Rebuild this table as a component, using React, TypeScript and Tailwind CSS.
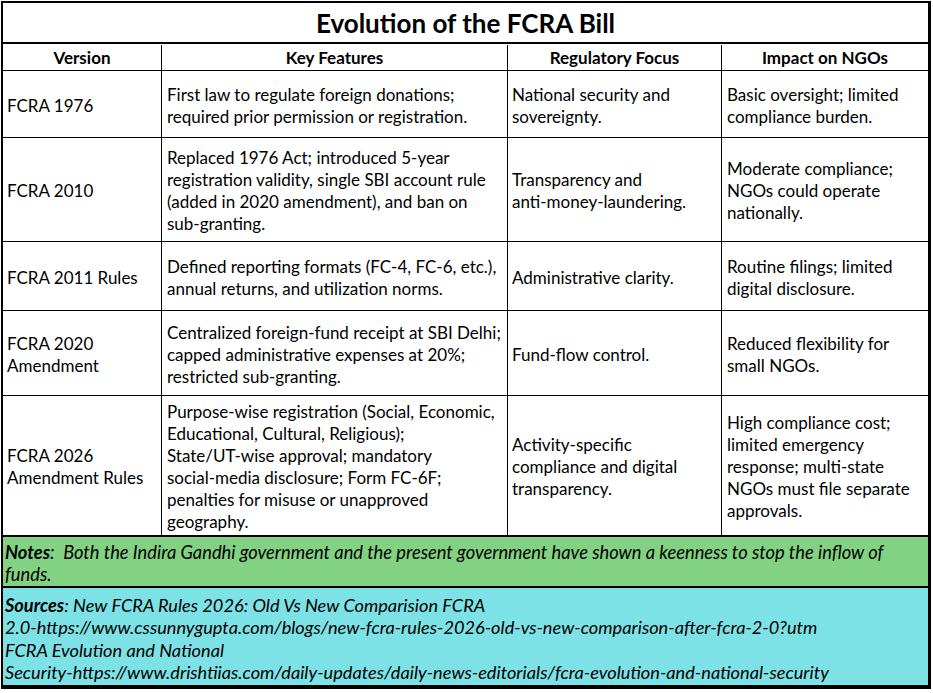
const rows = [
  {
    h: "h-[67px]",
    last: false,
    version: ["FCRA 1976"],
    features: [
      "First law to regulate foreign donations;",
      "required prior permission or registration.",
    ],
    focus: ["National security and", "sovereignty."],
    impact: ["Basic oversight; limited", "compliance burden."],
  },
  {
    h: "h-[104px]",
    last: false,
    version: ["FCRA 2010"],
    features: [
      "Replaced 1976 Act; introduced 5-year",
      "registration validity, single SBI account rule",
      "(added in 2020 amendment), and ban on",
      "sub-granting.",
    ],
    focus: ["Transparency and", "anti-money-laundering."],
    impact: ["Moderate compliance;", "NGOs could operate", "nationally."],
  },
  {
    h: "h-[69px]",
    last: false,
    version: ["FCRA 2011 Rules"],
    features: [
      "Defined reporting formats (FC-4, FC-6, etc.),",
      "annual returns, and utilization norms.",
    ],
    focus: ["Administrative clarity."],
    impact: ["Routine filings; limited", "digital disclosure."],
  },
  {
    h: "h-[85px]",
    last: false,
    version: ["FCRA 2020", "Amendment"],
    features: [
      "Centralized foreign-fund receipt at SBI Delhi;",
      "capped administrative expenses at 20%;",
      "restricted sub-granting.",
    ],
    focus: ["Fund-flow control."],
    impact: ["Reduced flexibility for", "small NGOs."],
  },
  {
    h: "h-[141px]",
    last: true,
    version: ["FCRA 2026", "Amendment Rules"],
    features: [
      "Purpose-wise registration (Social, Economic,",
      "Educational, Cultural, Religious);",
      "State/UT-wise approval; mandatory",
      "social-media disclosure; Form FC-6F;",
      "penalties for misuse or unapproved",
      "geography.",
    ],
    focus: ["Activity-specific", "compliance and digital", "transparency."],
    impact: [
      "High compliance cost;",
      "limited emergency",
      "response; multi-state",
      "NGOs must file separate",
      "approvals.",
    ],
  },
];

function Lines({ lines }: { lines: string[] }) {
  return (
    <div>
      {lines.map((line) => (
        <div key={line} className="whitespace-nowrap">
          {line}
        </div>
      ))}
    </div>
  );
}

export default function App() {
  return (
    <div className="min-h-screen bg-white pl-[1px] pt-[1px] font-['Lato',sans-serif] text-black">
      <div className="w-[930px] border-t-2 border-b-[4px] border-l-2 border-r-[3px] border-black">
        <div className="flex h-[41px] items-center justify-center border-b-2 border-black pt-[1px] text-[26px] font-bold">
          Evolution of the FCRA Bill
        </div>

        <div className="flex h-[27px] border-b border-black pt-[1px] text-[17px] font-bold">
          <div className="flex w-[159px] items-center justify-center border-r border-black">
            Version
          </div>
          <div className="flex w-[346px] items-center justify-center border-r border-black">
            Key Features
          </div>
          <div className="flex w-[214px] items-center justify-center border-r border-black">
            Regulatory Focus
          </div>
          <div className="flex flex-1 items-center justify-center">
            Impact on NGOs
          </div>
        </div>

        {rows.map((row) => (
          <div
            key={row.version.join(" ")}
            className={`flex ${row.h} border-black text-[17px] leading-[22px] ${
              row.last ? "border-b-2" : "border-b"
            }`}
          >
            <div className="flex w-[159px] items-center border-r border-black px-[4px] pt-[3px]">
              <Lines lines={row.version} />
            </div>
            <div className="flex w-[346px] items-center border-r border-black px-[5px] pt-[3px]">
              <Lines lines={row.features} />
            </div>
            <div className="flex w-[214px] items-center border-r border-black px-[4px] pt-[3px]">
              <Lines lines={row.focus} />
            </div>
            <div className="flex flex-1 items-center px-[5px] pt-[3px]">
              <Lines lines={row.impact} />
            </div>
          </div>
        ))}

        <div className="flex h-[51px] items-center border-b-2 border-black bg-[#83d283] pl-[2px] pt-[2px] text-[18.3px] leading-[22px] italic">
          <div>
            <div className="whitespace-nowrap">
              <span className="font-bold">Notes</span>:&nbsp; Both the Indira
              Gandhi government and the present government have shown a
              keenness to stop the inflow of
            </div>
            <div>funds.</div>
          </div>
        </div>

        <div className="flex h-[97px] items-center bg-[#7de2e6] pl-[2px] pt-[4px] text-[18.2px] leading-[22.5px] italic">
          <div>
            <div className="whitespace-nowrap">
              <span className="font-bold">Sources</span>: New FCRA Rules 2026:
              Old Vs New Comparision FCRA
            </div>
            <div className="whitespace-nowrap">
              2.0-https://www.cssunnygupta.com/blogs/new-fcra-rules-2026-old-vs-new-comparison-after-fcra-2-0?utm
            </div>
            <div className="whitespace-nowrap">
              FCRA Evolution and National
            </div>
            <div className="whitespace-nowrap">
              Security-https://www.drishtiias.com/daily-updates/daily-news-editorials/fcra-evolution-and-national-security
            </div>
          </div>
        </div>
      </div>
    </div>
  );
}
